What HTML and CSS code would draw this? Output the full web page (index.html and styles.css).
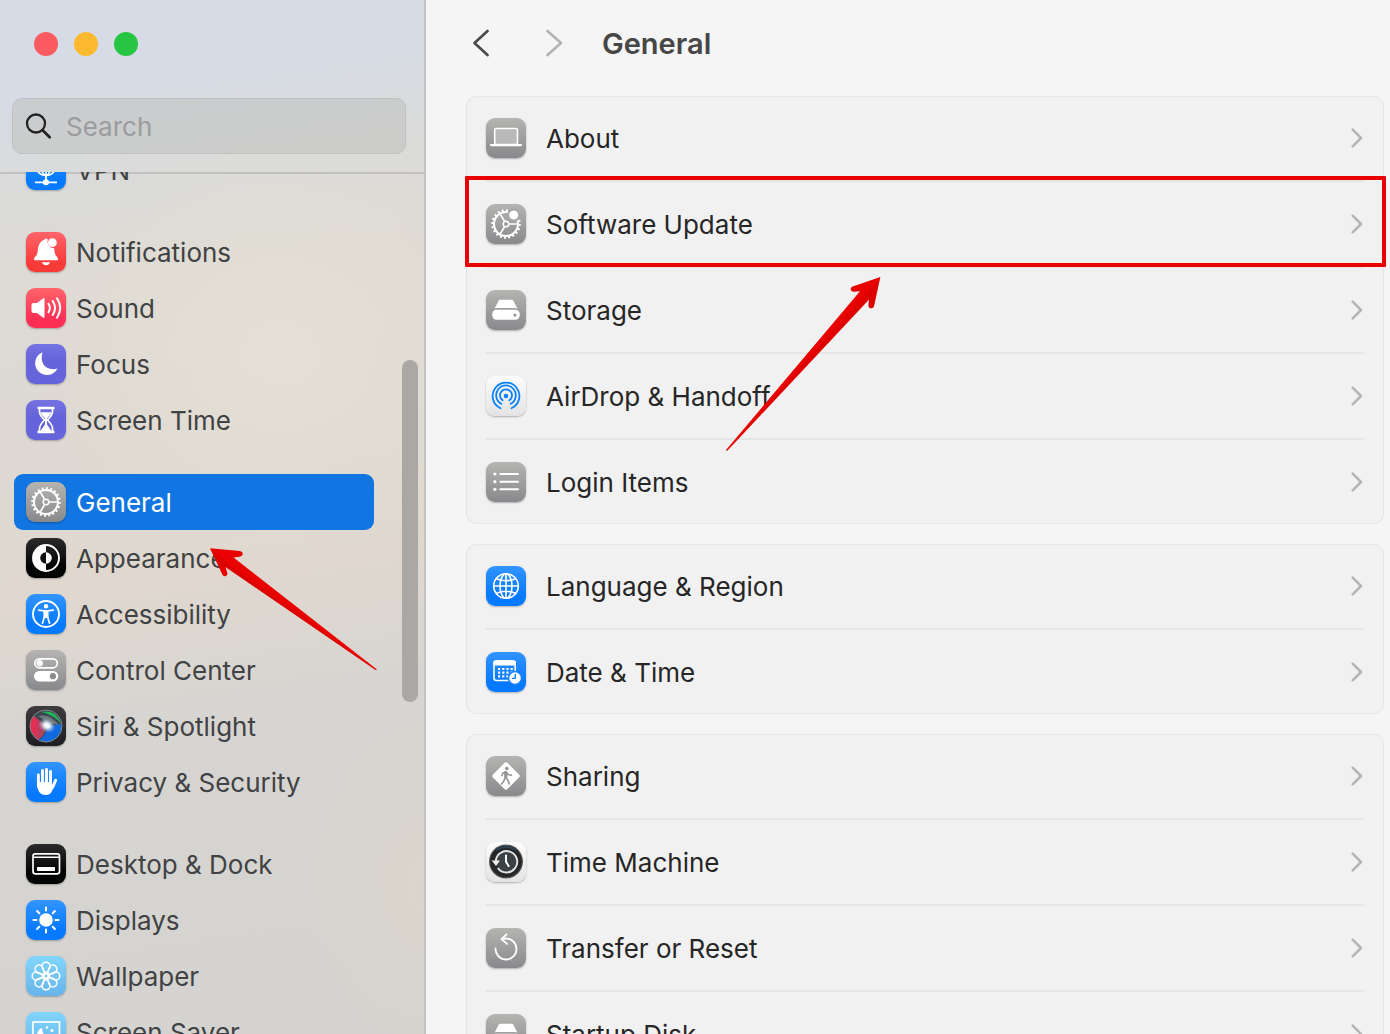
FILE: index.html
```html
<!DOCTYPE html>
<html lang="en">
<head>
<meta charset="utf-8">
<title>General</title>
<link rel="stylesheet" href="styles.css">
</head>
<body>
<svg class="defs" aria-hidden="true">
  <defs>
    <radialGradient id="siri-glow"><stop offset="0" stop-color="#fff"/><stop offset=".35" stop-color="#eef4ff" stop-opacity=".95"/><stop offset="1" stop-color="#9ab" stop-opacity="0"/></radialGradient>
    <linearGradient id="siri-red"><stop offset="0" stop-color="#ff1f45"/><stop offset="1" stop-color="#ff4d7d" stop-opacity=".4"/></linearGradient>
    <symbol id="gear" viewBox="0 0 40 40">
      <g fill="none" stroke="#fff">
        <circle cx="20" cy="20" r="12" stroke-width="2"/>
        <circle cx="20" cy="20" r="13.700" stroke-width="2.200" pathLength="40" stroke-dasharray=".9 1.1"/>
        <circle cx="20" cy="20" r="2.800" stroke-width="1.500"/>
        <path d="M23 20h9M18.600 17.400L14 9.600M18.600 22.600L14 30.400" stroke-width="1.700"/>
      </g>
    </symbol>
    <symbol id="disk" viewBox="0 0 40 40">
      <path d="M12.800 10.600q.4-.9 1.400-.9h11.600q1 0 1.400.9l4.200 8q-1-.5-2.400-.5H11q-1.400 0-2.400.5z" fill="#fff"/>
      <rect x="6.300" y="19.700" width="27.400" height="10" rx="4.200" fill="#fff"/>
      <circle cx="29" cy="25" r="1.600" fill="#929292"/>
    </symbol>
    <symbol id="chevron" viewBox="0 0 12 20"><path d="M1.700 1.700L10 10l-8.300 8.300" fill="none" stroke="currentColor" stroke-width="2.500" stroke-linecap="round" stroke-linejoin="round"/></symbol>
  </defs>
</svg>

<div class="window">
  <aside class="sidebar">
    <header class="sidebar-head">
      <div class="lights">
        <button class="light close" type="button" aria-label="Close"></button>
        <button class="light minimize" type="button" aria-label="Minimize"></button>
        <button class="light expand" type="button" aria-label="Zoom"></button>
      </div>
      <label class="search">
        <svg width="28" height="28" viewBox="0 0 28 28" aria-hidden="true"><g fill="none" stroke="#222" stroke-width="2.300" stroke-linecap="round"><circle cx="11" cy="11.500" r="9"/><path d="M17.700 18.200l7 7" stroke-width="2.800"/></g></svg>
        <input type="search" placeholder="Search" aria-label="Search">
      </label>
    </header>

    <nav class="side-list">
      <div class="side-group">
        <a class="side-item" href="#vpn"><svg class="tile blue" viewBox="0 0 40 40"><g fill="none" stroke="#fff" stroke-width="1.500"><circle cx="20" cy="15" r="10.500"/><ellipse cx="20" cy="15" rx="4.700" ry="10.500"/><path d="M20 4v26M10 15h20M12 22q8-4 16 0M9 32.300h22" stroke-width="1.800"/></g><circle cx="20" cy="32.300" r="3" fill="#fff"/></svg><span>VPN</span></a>
      </div>
      <div class="side-group">
        <a class="side-item" href="#notifications"><svg class="tile red" viewBox="0 0 40 40"><path d="M8.500 28.300q-1.200-1.500.3-3 2.700-2.500 2.900-6 0-4 1.600-7.300 1.700-3.300 5-4.200 1.500-2.300 3.500-.3-1 4.300 1.700 7 2 1.900 4.700 1.500l.4 4q.3 3 2.500 5 1.600 1.800.4 3.300z" fill="#fff"/><circle cx="26.400" cy="10.700" r="4.400" fill="#fff"/><path d="M15.800 30.300h8.400q-1.200 3-4.200 3t-4.200-3z" fill="#fff"/></svg><span>Notifications</span></a>
        <a class="side-item" href="#sound"><svg class="tile pink" viewBox="0 0 40 40"><path d="M5.500 17q0-2 2-2H11l6-4.600q1.500-1.100 1.500.8v17.600q0 1.900-1.500.8L11 25H7.500q-2 0-2-2z" fill="#fff"/><path d="M22.500 15.800q2.700 4.200 0 8.400M26.700 13q4.700 7 0 14M31 10.300q6.500 9.700 0 19.400" fill="none" stroke="#fff" stroke-width="2" stroke-linecap="round"/></svg><span>Sound</span></a>
        <a class="side-item" href="#focus"><svg class="tile violet" viewBox="0 0 40 40"><path d="M16.500 8.300a11.800 11.800 0 1 0 15 16.200C21 27.500 13 20 16.500 8.300z" fill="#fff"/></svg><span>Focus</span></a>
        <a class="side-item" href="#screen-time"><svg class="tile violet" viewBox="0 0 40 40"><path d="M13.500 8h13v3.500q0 3.500-5 8.500 5 5 5 8.500V32h-13v-3.500q0-3.500 5-8.500-5-5-5-8.500z" fill="none" stroke="#fff" stroke-width="1.700"/><path d="M11.500 6.800h17v2.500h-17zM11.500 30.700h17v2.500h-17zM14.500 12.300h11q-1 3-4.500 6.200v6l4.500 6.500h-11l4.500-6.500v-6q-3.500-3.200-4.500-6.200z" fill="#fff"/></svg><span>Screen Time</span></a>
      </div>
      <div class="side-group">
        <a class="side-item selected" href="#general" aria-current="page"><svg class="tile gray" viewBox="0 0 40 40"><use href="#gear"/></svg><span>General</span></a>
        <a class="side-item" href="#appearance"><svg class="tile black" viewBox="0 0 40 40"><circle cx="20" cy="20" r="13" fill="none" stroke="#fff" stroke-width="1.900"/><path d="M20 7a13 13 0 0 0 0 26zM20 14.200a5.800 5.800 0 0 1 0 11.600z" fill="#fff"/><path d="M20 14.200a5.800 5.800 0 0 0 0 11.600z" fill="#111"/></svg><span>Appearance</span></a>
        <a class="side-item" href="#accessibility"><svg class="tile blue" viewBox="0 0 40 40"><circle cx="20" cy="20" r="13" fill="none" stroke="#fff" stroke-width="1.900"/><circle cx="20" cy="12.300" r="2.200" fill="#fff"/><path d="M12.800 16.200q7.200 1.600 14.400 0M18.500 17v5.500l-2 6.700M21.500 17v5.500l2 6.700" fill="none" stroke="#fff" stroke-width="1.700" stroke-linecap="round"/><path d="M17.700 16.500h4.600v7.500h-4.600z" fill="#fff"/></svg><span>Accessibility</span></a>
        <a class="side-item" href="#control-center"><svg class="tile gray" viewBox="0 0 40 40"><rect x="8.800" y="8.800" width="22.500" height="9" rx="4.500" fill="none" stroke="#fff" stroke-width="1.700"/><circle cx="13.700" cy="13.300" r="3.200" fill="#fff"/><rect x="8" y="21" width="24.300" height="10.500" rx="5.250" fill="#fff"/><circle cx="26.900" cy="26.200" r="3.100" fill="#8b8b8e"/></svg><span>Control Center</span></a>
        <a class="side-item" href="#siri"><svg class="tile siri" viewBox="0 0 40 40"><circle cx="20" cy="20" r="16" fill="#3c4650"/><path d="M20 20L8 10Q4 14 4 20T12 34Q20 29 20 20z" fill="url(#siri-red)"/><path d="M20 20Q22 28 13 34q11 5 19-4 5-6 3-12z" fill="#0b6ff0" opacity=".9"/><path d="M16 6q14-3 19 12-5-8-19-12z" fill="#1fc05a" opacity=".9"/><path d="M12 10q12-3 21 9-9-3-12 0-3-6-9-9z" fill="#8d999d" opacity=".6"/><circle cx="20" cy="20" r="16" fill="none" stroke="#818995" stroke-width="1"/><ellipse cx="21" cy="19.500" rx="9" ry="7" fill="url(#siri-glow)" transform="rotate(25 21 19.500)"/></svg><span>Siri &amp; Spotlight</span></a>
        <a class="side-item" href="#privacy"><svg class="tile blue" viewBox="0 0 40 40"><g fill="none" stroke="#fff" stroke-width="2.900" stroke-linecap="round"><path d="M12.400 13v11M16.500 8.500V22M20.500 7.500V22M24.500 9.500V22M29.700 18.300l-3 7"/></g><path d="M11 20h15v3l3.500-2.500q-1.700 5-3.200 8-2 4.500-6.500 4.500-4.300 0-6.800-3.300Q11 27 11 22z" fill="#fff"/></svg><span>Privacy &amp; Security</span></a>
      </div>
      <div class="side-group">
        <a class="side-item" href="#desktop"><svg class="tile black" viewBox="0 0 40 40"><rect x="7" y="9.800" width="26.500" height="20" rx="2.200" fill="none" stroke="#fff" stroke-width="1.700"/><path d="M7 13.200h26" stroke="#fff" stroke-width="1.600"/><rect x="11" y="23" width="18" height="4" rx=".8" fill="#fff"/></svg><span>Desktop &amp; Dock</span></a>
        <a class="side-item" href="#displays"><svg class="tile blue" viewBox="0 0 40 40"><circle cx="20" cy="20" r="6.800" fill="#fff"/><path d="M20 7.500v3M20 29.500v3M7.500 20h3M29.500 20h3M11.100 11.100l2.200 2.200M26.700 26.700l2.200 2.200M28.900 11.100l-2.200 2.200M13.300 26.700l-2.200 2.200" stroke="#fff" stroke-width="2.100" stroke-linecap="round"/></svg><span>Displays</span></a>
        <a class="side-item" href="#wallpaper"><svg class="tile sky" viewBox="0 0 40 40"><g fill="none" stroke="#fff" stroke-width="1.500"><g id="petals"><path d="M20 17.500c-1.700-2.500-4-4.500-4-7.300a4 4 0 0 1 8 0c0 2.800-2.300 4.800-4 7.300z"/><path d="M20 22.500c-1.700 2.500-4 4.500-4 7.300a4 4 0 0 0 8 0c0-2.800-2.300-4.800-4-7.300z"/><path d="M17.500 20c-2.500-1.700-4.500-4-7.300-4a4 4 0 0 0 0 8c2.800 0 4.800-2.300 7.300-4z"/><path d="M22.500 20c2.500-1.700 4.500-4 7.300-4a4 4 0 0 1 0 8c-2.800 0-4.800-2.300-7.300-4z"/></g><use href="#petals" transform="rotate(45 20 20)"/><circle cx="20" cy="20" r="2.200"/></g></svg><span>Wallpaper</span></a>
        <a class="side-item" href="#screen-saver"><svg class="tile sky" viewBox="0 0 40 40"><rect x="7" y="10" width="26.500" height="20" fill="none" stroke="#fff" stroke-width="1.700"/><path d="M16 16a6 6 0 1 0 7 8q-7 0-7-8z" fill="#fff"/><circle cx="21" cy="15.500" r="1.200" fill="#fff"/><circle cx="26" cy="18.500" r="1.500" fill="#fff"/></svg><span>Screen Saver</span></a>
      </div>
    </nav>
    <div class="scroll-thumb"></div>
    <svg class="arrow arrow-side" width="170" height="126" viewBox="0 0 170 126" aria-hidden="true"><path d="M2 2.300L32 5q3 .5 2.700 3.200-.5 2.300-3.200 2.500l-6 .8L169 123.500 167.500 124 17.500 21l1.800 6q.5 2.400-1.500 3-2.300.7-3.500-1.500z" fill="#e90202"/><path d="M2 2.300L12 20l3 3 2.500-2L168.500 124 20 18z" fill="#cf0000" opacity=".5"/></svg>
  </aside>

  <main class="content">
    <header class="toolbar">
      <button type="button" class="nav back" aria-label="Back"><svg width="20" height="30" viewBox="0 0 20 30"><path d="M17.500 3L4.500 15l13 12" fill="none" stroke="currentColor" stroke-width="2.700" stroke-linecap="round" stroke-linejoin="round"/></svg></button>
      <button type="button" class="nav forward" aria-label="Forward"><svg width="20" height="30" viewBox="0 0 20 30"><path d="M3.500 3L17 15 3.500 27" fill="none" stroke="currentColor" stroke-width="2.700" stroke-linecap="round" stroke-linejoin="round"/></svg></button>
      <h1>General</h1>
    </header>

    <section class="card">
      <a class="row" href="#about"><svg class="tile gray" viewBox="0 0 40 40"><rect x="8.700" y="10.500" width="22.800" height="16" rx="1.500" fill="#b9b9b9" stroke="#fff" stroke-width="1.600"/><path d="M4 26h32v.8q0 1.500-1.500 1.500h-29Q4 28.300 4 26.800z" fill="#fff"/></svg><span>About</span><svg class="chev"><use href="#chevron"/></svg></a>
      <a class="row marked" href="#software-update"><svg class="tile gray" viewBox="0 0 40 40"><use href="#gear"/><circle cx="27.700" cy="11" r="5.600" fill="#fff" stroke="#a5a5a4" stroke-width="2"/></svg><span>Software Update</span><svg class="chev"><use href="#chevron"/></svg></a>
      <a class="row" href="#storage"><svg class="tile gray" viewBox="0 0 40 40"><use href="#disk"/></svg><span>Storage</span><svg class="chev"><use href="#chevron"/></svg></a>
      <a class="row" href="#airdrop"><svg class="tile white" viewBox="0 0 40 40"><g fill="none" stroke="#0a80fb" stroke-width="1.800" stroke-linecap="round"><path d="M14.500 32.200a13.400 13.400 0 1 1 11 0"/><path d="M15.300 27.800a9.800 9.800 0 1 1 9.400 0"/><path d="M16.600 24.300a6 6 0 1 1 6.800 0"/></g><circle cx="20" cy="20" r="2.300" fill="#0a80fb"/></svg><span>AirDrop &amp; Handoff</span><svg class="chev"><use href="#chevron"/></svg></a>
      <a class="row" href="#login-items"><svg class="tile gray" viewBox="0 0 40 40"><g fill="#fff"><circle cx="8.900" cy="12" r="1.600"/><circle cx="8.900" cy="19.700" r="1.600"/><circle cx="8.900" cy="27.300" r="1.600"/></g><path d="M14.300 12h17.700M14.300 19.700h17.700M14.300 27.300h17.700" stroke="#fff" stroke-width="1.900" stroke-linecap="round"/></svg><span>Login Items</span><svg class="chev"><use href="#chevron"/></svg></a>
    </section>

    <section class="card">
      <a class="row" href="#language"><svg class="tile blue" viewBox="0 0 40 40"><g fill="none" stroke="#fff" stroke-width="1.600"><circle cx="20" cy="20" r="12.300"/><ellipse cx="20" cy="20" rx="6" ry="12.300"/><path d="M20 7.700v24.600M7.700 20h24.600M10 12.500q10 4.500 20 0M10 27.500q10-4.500 20 0"/></g></svg><span>Language &amp; Region</span><svg class="chev"><use href="#chevron"/></svg></a>
      <a class="row" href="#date"><svg class="tile blue" viewBox="0 0 40 40"><rect x="8" y="9" width="21.200" height="19.500" rx="2.500" fill="none" stroke="#fff" stroke-width="1.600"/><path d="M7.200 13.500V11q0-2.800 2.800-2.800h17.200q2.800 0 2.800 2.800v2.500z" fill="#fff"/><path d="M12 17h15M12 20.700h15M12 24.400h10" stroke="#fff" stroke-width="2.200" stroke-dasharray="2.200 2"/><circle cx="29" cy="26" r="6.500" fill="#fff" stroke="#1683ff" stroke-width="1.500"/><path d="M29.300 22v4.300H26" fill="none" stroke="#0b7bff" stroke-width="1.300"/></svg><span>Date &amp; Time</span><svg class="chev"><use href="#chevron"/></svg></a>
    </section>

    <section class="card">
      <a class="row" href="#sharing"><svg class="tile gray" viewBox="0 0 40 40"><rect x="9.700" y="9.700" width="20.600" height="20.600" rx="2.200" fill="#fff" transform="rotate(45 20 20)"/><circle cx="20.800" cy="12.500" r="1.800" fill="#929292"/><path d="M20 15.800l-.6 5.700 2.400 2.500 1.500 4M19 22l-1.200 3-2.200 3M16 19.500l1-2.500 3-1 2.500 2.700 3 .5" fill="none" stroke="#929292" stroke-width="1.600" stroke-linecap="round" stroke-linejoin="round"/><path d="M18 15.500h3.200l.3 6h-3.200z" fill="#929292"/></svg><span>Sharing</span><svg class="chev"><use href="#chevron"/></svg></a>
      <a class="row" href="#time-machine"><svg class="tile white" viewBox="0 0 40 40"><circle cx="20" cy="19.500" r="17" fill="#555"/><circle cx="20" cy="19.500" r="15.800" fill="#252729"/><path d="M10 8.500q10-7 20 0" fill="none" stroke="#29485e" stroke-width="1.500"/><circle cx="20" cy="19.500" r="10" fill="#3c4145"/><path d="M9.800 19.500a10.700 10.700 0 1 1 2 6.500" fill="none" stroke="#e2e2e2" stroke-width="2"/><path d="M5.700 18.500h8.300l-4 5.500z" fill="#eee"/><path d="M20 12.700v7l3 5" fill="none" stroke="#fff" stroke-width="2"/></svg><span>Time Machine</span><svg class="chev"><use href="#chevron"/></svg></a>
      <a class="row" href="#transfer"><svg class="tile gray" viewBox="0 0 40 40"><path d="M9.500 20.500A10.500 10.500 0 1 0 20 10.500q-2 0-4.500.6M20.500 6.300l-5 4.900 5.600 4.700" fill="none" stroke="#fff" stroke-width="1.800" stroke-linecap="round" stroke-linejoin="round"/></svg><span>Transfer or Reset</span><svg class="chev"><use href="#chevron"/></svg></a>
      <a class="row" href="#startup"><svg class="tile gray" viewBox="0 0 40 40"><use href="#disk"/></svg><span>Startup Disk</span><svg class="chev"><use href="#chevron"/></svg></a>
    </section>
    <svg class="arrow arrow-main" width="158" height="178" viewBox="0 0 158 178" aria-hidden="true"><path d="M155.300 2L149 31q-.8 2.500-3 2.200-2.500-.2-2.500-3l.5-5.800L2 176 1 175 135 16.200l-6 .5q-2.700.2-3.300-2.200-.4-2.300 2-3z" fill="#e90202"/><path d="M155.300 2L149 31q-.8 2.500-3 2.200-2.500-.2-2.500-3l.5-5.800L2 176 140 20z" fill="#cf0000" opacity=".45"/></svg>
  </main>
</div>
</body>
</html>
```
FILE: styles.css
```css
* {
  box-sizing: border-box;
}

body {
  margin: 0;
  background: #f5f5f5;
  color: #262626;
  font-family: Inter, "Liberation Sans", sans-serif;
  font-size: 26px;
  line-height: 32px;
}

a {
  color: inherit;
  text-decoration: none;
}

button {
  padding: 0;
  border: 0;
  background: none;
}

.defs {
  position: absolute;
  width: 0;
  height: 0;
}

.window {
  display: flex;
  height: 100vh;
  overflow: hidden;
}

/* Sidebar */
.sidebar {
  position: relative;
  display: flex;
  flex: none;
  flex-direction: column;
  width: 426px;
  border-right: 2px solid #c3c3c3;
  background:
    radial-gradient(ellipse 260px 220px at 66% 34%, #e4e0d5 0%, #e4e0d500 100%),
    radial-gradient(ellipse 120px 180px at 100% 86%, #dad5cc 0%, #dad5cc00 100%),
    linear-gradient(172deg, #d5dce6 0%, #d6dce5 9%, #dadbda 17%, #dedad4 27%, #ddd9d2 43%, #e0d8cf 55%, #d7d5d1 67%, #d4d3cf 100%);
}

.sidebar-head {
  flex: none;
  height: 172px;
  padding: 32px 18px 0 12px;
}

.lights {
  display: flex;
  gap: 16px;
  margin: 0 22px 42px;
}

.light {
  width: 24px;
  height: 24px;
  border-radius: 50%;
}

.close { background: #fc5b60; }
.minimize { background: #fdb92e; }
.expand { background: #28c543; }

.search {
  display: flex;
  align-items: center;
  gap: 13px;
  height: 56px;
  padding: 0 12px;
  border: 1px solid #bfbfbf;
  border-radius: 10px;
  background: rgb(190 190 188 / 50%);
}

.search input {
  flex: 1;
  min-width: 0;
  padding: 2px 0 0;
  border: 0;
  outline: 0;
  background: none;
  color: #262626;
  font: inherit;
}

.search input::placeholder {
  color: #9b9c9e;
}

.side-list {
  flex: 1;
  min-height: 0;
  overflow: hidden;
  padding: 0 50px 0 14px;
  background: linear-gradient(#c1c0bf, #c1c0bf) 0 0 / 100% 2px no-repeat;
}

.side-group {
  margin-bottom: 26px;
}

.side-group:first-child {
  margin-top: -30px;
}

.side-item {
  display: flex;
  align-items: center;
  gap: 10px;
  height: 56px;
  padding: 0 12px;
  border-radius: 9px;
  color: #414244;
}

.side-item span,
.row span,
h1 {
  padding-top: 2px;
}

.selected {
  background: #1176e2;
  color: #fff;
}

.scroll-thumb {
  position: absolute;
  top: 360px;
  right: 6px;
  width: 16px;
  height: 342px;
  border-radius: 8px;
  background: #a9a8a4;
}

/* Icon tiles */
.tile {
  flex: none;
  width: 40px;
  height: 40px;
  border-radius: 9px;
  box-shadow: 0 1px 2px rgb(0 0 0 / 28%);
}

.blue { background: linear-gradient(#3294ff, #067aff 75%); }
.red { background: linear-gradient(#ff646a, #f53a38 80%); }
.pink { background: linear-gradient(#ff646b, #fd2e54 80%); }
.violet { background: linear-gradient(#7572e2, #6664db 40%); }
.gray { background: linear-gradient(#b5b4b1, #88898c); }
.black { background: linear-gradient(#2c2b2c, #020403 70%); }
.sky { background: linear-gradient(#81d6fb, #67b4eb); }
.siri { background: linear-gradient(#3e3b3e, #1d1d20); }
.white { background: linear-gradient(#fcfcfc, #e3e3e3); }

/* Content */
.content {
  position: relative;
  display: flex;
  flex: 1;
  flex-direction: column;
  gap: 20px;
  min-width: 0;
  padding: 0 6px 0 40px;
}

.toolbar {
  display: flex;
  flex: none;
  align-items: center;
  height: 76px;
  padding: 10px 4px 0;
}

.nav {
  display: flex;
}

.back {
  margin-right: 54px;
  color: #4b4b4b;
}

.forward {
  margin-right: 38px;
  color: #b4b4b4;
}

h1 {
  margin: 0;
  color: #464646;
  font-size: 29px;
  font-weight: 600;
}

.card {
  flex: none;
  padding: 0 20px;
  border-radius: 10px;
  background: #f1f1f1;
  box-shadow: inset 0 0 0 1px #e5e5e5;
}

.row {
  position: relative;
  display: flex;
  align-items: center;
  gap: 20px;
  height: 84px;
}

.row + .row {
  height: 86px;
  border-top: 2px solid #e5e5e5;
}

.row span {
  flex: 1;
}

.chev {
  width: 12px;
  height: 20px;
  margin-right: 1px;
  color: #b5b5b5;
}

/* Highlight frame and arrows */
.marked {
  z-index: 1;
}

.marked::after {
  content: "";
  position: absolute;
  inset: -6px -22px -1px -21px;
  border: 4px solid #e90202;
  border-radius: 1px;
}

.arrow {
  position: absolute;
  z-index: 2;
  pointer-events: none;
}

.arrow-side {
  top: 546px;
  left: 208px;
}

.arrow-main {
  top: 275px;
  left: 299px;
}
```
